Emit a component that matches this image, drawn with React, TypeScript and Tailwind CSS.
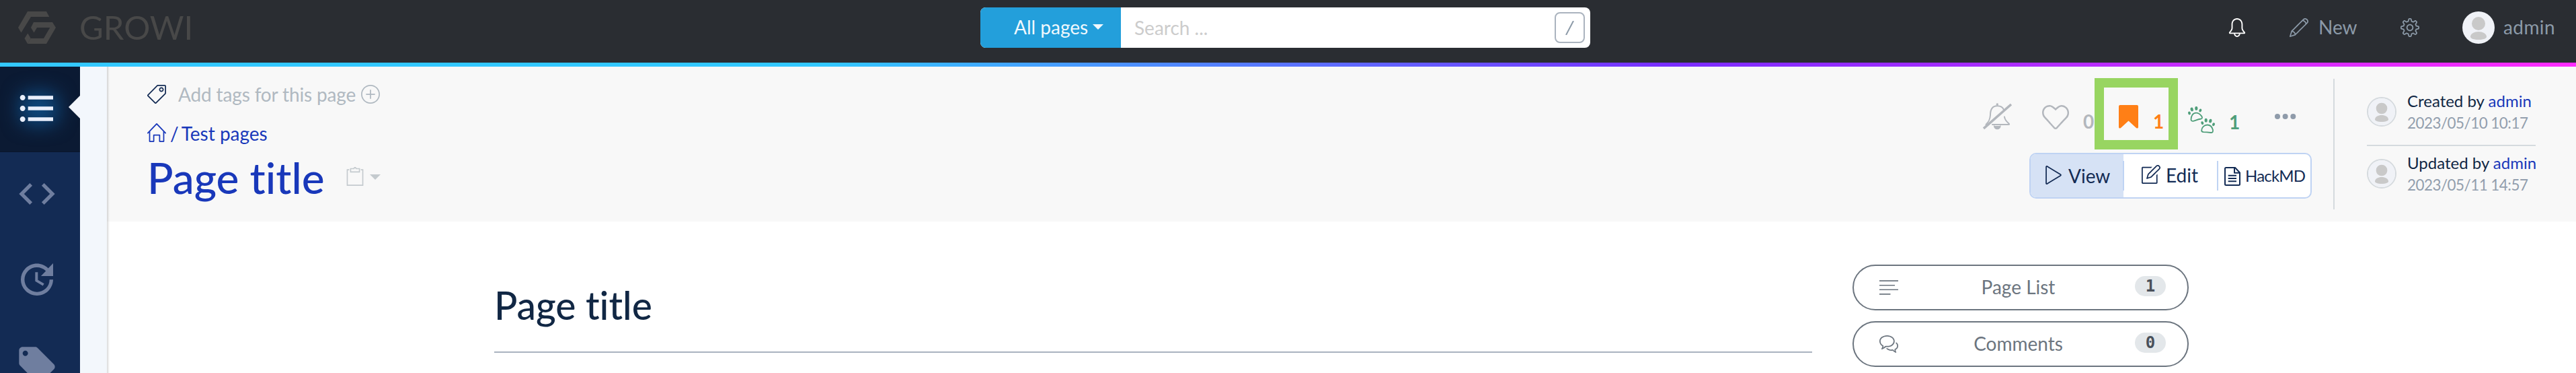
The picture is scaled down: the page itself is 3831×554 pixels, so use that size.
import React from "react";
import { SlBell, SlBubbles, SlControlPlay, SlHeart, SlHome, SlNote, SlPencil, SlPlus, SlSettings, SlTag } from "react-icons/sl";
import { TfiAlignLeft, TfiClipboard } from "react-icons/tfi";
import { MdCode, MdFormatListBulleted, MdLocalOffer, MdUpdate } from "react-icons/md";

function Logo() {
  return (
    <svg className="h-12 w-14 shrink-0" viewBox="0 0 56 48" fill="currentColor">
      <polygon points="14,0 42,0 46.3,8 19,8 4.5,31.5 0,24" />
      <polygon points="23,16 51,16 56,24 42,48 14,48 18.7,40 38,40 47.3,24 28,24 23.5,31.5 19,24" />
      <polygon points="14.3,32.5 18.7,40 14,48 9.5,40" />
    </svg>
  );
}

function Caret({ className }: { className: string }) {
  return (
    <svg className={className} viewBox="0 0 16 8" preserveAspectRatio="none" fill="currentColor">
      <polygon points="0,0 16,0 8,8" />
    </svg>
  );
}

function Avatar({ className }: { className: string }) {
  return (
    <svg className={className} viewBox="0 0 48 48">
      <circle cx="24" cy="24" r="24" fill="#f0f2f7" />
      <circle cx="24" cy="18" r="10" fill="#c9c9c9" />
      <path d="M12 37.5c0-4.5 6-7.5 12-7.5s12 3 12 7.5c0 3-5.5 4.5-12 4.5s-12-1.500-12-4.500z" fill="#c9c9c9" />
    </svg>
  );
}

function BellSlash() {
  return (
    <svg className="h-10 w-[45px]" viewBox="0 0 45 40" fill="none" stroke="currentColor" strokeWidth="2" strokeLinecap="round" strokeLinejoin="round">
      <circle cx="22.3" cy="2" r="1.7" fill="currentColor" stroke="none" />
      <path d="M5.500 32C9.500 28 11.500 25 12 18C12 9 15 4.300 22.300 4.300C27 4.300 30.500 6.500 32 10" />
      <path d="M33 20.500C33.500 25 36 27.500 39.500 30.500Q41 32 39 32H15" />
      <path d="M17.700 34a4.600 4.600 0 1 0 9.200 0" fill="currentColor" strokeWidth="1.5" />
      <path d="M2 37.800L43 2" strokeWidth="3.6" strokeLinecap="butt" />
    </svg>
  );
}

function Footprints() {
  return (
    <svg className="size-10 overflow-visible" viewBox="0 0 40 40" fill="currentColor">
      <ellipse cx="2" cy="10" rx="1.9" ry="2.5" transform="rotate(-20 2 10)" />
      <ellipse cx="5.7" cy="4.5" rx="2.1" ry="2.9" transform="rotate(-15 5.7 4.5)" />
      <ellipse cx="12.3" cy="2.9" rx="2.1" ry="2.9" />
      <ellipse cx="18.3" cy="6" rx="1.9" ry="2.5" transform="rotate(25 18.3 6)" />
      <ellipse cx="21.3" cy="24.7" rx="1.9" ry="2.5" transform="rotate(-20 21.3 24.7)" />
      <ellipse cx="26.7" cy="20.7" rx="2.1" ry="2.9" />
      <ellipse cx="33.3" cy="21.7" rx="2.1" ry="2.9" transform="rotate(12 33.3 21.7)" />
      <ellipse cx="38" cy="26.8" rx="1.9" ry="2.5" transform="rotate(25 38 26.8)" />
      <g fill="none" stroke="currentColor" strokeWidth="1.8" strokeLinejoin="round">
        <path d="M4.500 19.500C4.500 15 6.500 9.700 12 9.700C17 9.700 18.500 12.500 20.500 15C21.500 16.800 21 18 19.500 18.500C15 19 12 20.500 8.500 21.700C6 22.300 4.500 21.500 4.500 19.500Z" />
        <path d="M20.200 35.500C20.500 31 24 27.500 28.700 27.500C33.500 27.500 36 31 37 35C37.300 38 36.500 39 34 39C30 38.500 27 38.200 23 38.200C21 38 20 37.500 20.200 35.500Z" />
      </g>
    </svg>
  );
}

function DocIcon() {
  return (
    <svg className="h-7 w-6" viewBox="0 0 24 28" fill="none" stroke="currentColor" strokeWidth="2" strokeLinejoin="round">
      <path d="M2.500 1H16L23 8.500V25.500Q23 27 21.500 27H2.500Q1 27 1 25.500V2.500Q1 1 2.500 1Z" />
      <path d="M15 1V8.700H23" />
      <path d="M5.700 12.700H18M5.700 17H18M5.700 21.300H18" />
    </svg>
  );
}

function Author({ label, date }: { label: string; date: string }) {
  return (
    <div className="flex h-[92px] pt-[27px]">
      <div className="size-11 rounded-full border-2 border-[#d5dade]">
        <Avatar className="size-10" />
      </div>
      <div className="-mt-[12px] ml-[16px] flex flex-col">
        <div className="h-[34px] text-[24px] leading-[36px] text-[#112744]">
          {label} <span className="text-[#1938ba]">admin</span>
        </div>
        <div className="text-[22.4px] leading-[34px] tracking-[-0.5px] text-[#929ead]">{date}</div>
      </div>
    </div>
  );
}

function SideButton({ icon, label, count }: { icon: React.ReactNode; label: string; count: string }) {
  return (
    <div className="flex h-[68px] w-[500px] items-center rounded-full border-2 border-[#6c757f] pr-8 pl-[38px] text-[#6c757f]">
      {icon}
      <div className="mb-[2px] flex-1 pl-[5px] text-center text-[28px] leading-[42px]">{label}</div>
      <div className="mb-1 flex h-[30px] w-[46px] items-center justify-center rounded-full bg-[#e3e7ea] font-['DejaVu_Sans_Mono',monospace] text-[24px] leading-none font-bold text-[#49505a]">
        {count}
      </div>
    </div>
  );
}

function TopBar() {
  return (
    <header className="h-[99px] shrink-0 bg-[#2a2d32]">
      <div className="flex h-[93px] items-center pb-[11px] text-[28px] text-[#8c9aa8]">
        <div className="flex w-[1458px] items-center pl-[27px] text-[#484848]">
          <Logo />
          <span className="mb-[2px] ml-[35px] text-[49px] leading-[60px]">GROWI</span>
        </div>
        <div className="flex h-[60px] w-[907px] overflow-hidden rounded-lg bg-white">
          <div className="flex w-[209px] items-center bg-[#239fdb] pl-[50px] text-[#f0f8fd]">
            <span className="mb-[2px]">All pages</span>
            <Caret className="mb-[2px] ml-[7px] h-2 w-4" />
          </div>
          <div className="flex flex-1 items-center justify-between pr-2 pl-5">
            <span className="text-[#cccccc]">Search ...</span>
            <span className="flex h-[46px] w-[45px] items-center justify-center rounded-lg border-2 border-[#aab3be] text-[#8c9aa8]">
              <svg className="h-[21px] w-[13px]" viewBox="0 0 13 21" stroke="currentColor" strokeWidth="2"><path d="M12 0L1 21" /></svg>
            </span>
          </div>
        </div>
        <SlBell className="ml-[948px] size-7 text-white" />
        <SlPencil className="ml-[64px] size-7" />
        <span className="mb-[2px] ml-[15px] w-[122px]">New</span>
        <SlSettings className="size-7" />
        <Avatar className="ml-[64px] size-12" />
        <span className="mb-[2px] ml-[13px] tracking-[0.4px]">admin</span>
      </div>
      <div className="h-[6px] bg-[linear-gradient(90deg,#33c8ff_32%,#7a2dff_65%,#ff2bff_100%)]" />
    </header>
  );
}

function Sidebar() {
  return (
    <nav className="flex w-[159px] shrink-0 overflow-hidden bg-[#f3f7fc]">
      <div className="h-[600px] w-[119px] bg-[#132b54] text-[#6f7e9f]">
        <div className="relative h-[127px] border-b border-[#0a152b] bg-[#0b1a33] pt-[30px] pl-[23px] text-[#e9effb]">
          <div className="absolute top-[38px] left-[30px] h-[48px] w-[56px] rounded-xl bg-[#0f4a80] blur-[14px]" />
          <MdFormatListBulleted className="relative size-16" />
          <svg className="absolute top-[43px] right-0 h-[34px] w-[17px]" viewBox="0 0 17 34" fill="#f3f6fd">
            <polygon points="17,0 17,34 0,17" />
          </svg>
        </div>
        <div className="h-[127px] pt-[30px] pl-[23px]"><MdCode className="size-16" /></div>
        <div className="h-[127px] pt-[30px] pl-[23px]"><MdUpdate className="size-16" /></div>
        <div className="h-[127px] pt-[30px] pl-[23px]"><MdLocalOffer className="size-16" /></div>
      </div>
    </nav>
  );
}

function PageActions() {
  return (
    <div className="w-[420px] text-[28px]">
      <div className="relative flex h-[128px] leading-[42px] font-bold">
        <div className="-ml-[70px] pt-[54px] text-[#b3b7bd]"><BellSlash /></div>
        <SlHeart className="mt-[55px] ml-[44px] size-10 text-[#b3b7bd]" />
        <span className="mt-[60px] ml-[21px] w-[53px] text-[#b3b7bd]">0</span>
        <svg className="mt-[57px] h-[35px] w-[29px] text-[#ff7f16]" viewBox="0 0 29 35" fill="currentColor">
          <path d="M2 0H27Q29 0 29 2V33Q28.500 35.500 26 34L14.500 23.500L3 34Q.5 35.500 0 33V2Q0 0 2 0Z" />
        </svg>
        <span className="mt-[60px] ml-[22px] w-[52px] text-[#ff7f16]">1</span>
        <div className="mt-[59px] text-[#4f9e7a]"><Footprints /></div>
        <span className="mt-[61px] ml-[21px] w-[68px] text-[#4f9e7a]">1</span>
        <svg className="mt-[70px] h-2 w-8 shrink-0 text-[#8f9baa]" viewBox="0 0 32 8" fill="currentColor">
          <circle cx="4" cy="4" r="4" />
          <circle cx="15.6" cy="4" r="4" />
          <circle cx="27.3" cy="4" r="4" />
        </svg>
        <div className="absolute top-[17px] left-[97px] h-[106px] w-[124px] border-[14px] border-[#98d561]" />
      </div>
      <div className="flex h-[68px] items-center overflow-hidden rounded-[10px] border-2 border-[#bfd3f3] bg-white text-[#132b54]">
        <div className="flex h-full w-[138px] items-center bg-[#d6e2f5] pl-[20px]">
          <SlControlPlay className="mb-[2px] size-7" />
          <span className="ml-[8px]">View</span>
        </div>
        <div className="-ml-px h-[44px] w-[2px] bg-[#bfd3f3]" />
        <div className="flex w-[138px] items-center pl-[26px]">
          <SlNote className="mb-[4px] size-7 shrink-0" />
          <span className="mb-[2px] ml-[8px]">Edit</span>
        </div>
        <div className="h-[44px] w-[2px] bg-[#bfd3f3]" />
        <div className="ml-[9px] pt-[2px]"><DocIcon /></div>
        <span className="ml-[7px] text-[24px] tracking-[-0.8px]">HackMD</span>
      </div>
    </div>
  );
}

function SubNav() {
  return (
    <div className="flex h-[230px] shrink-0 bg-[#f8f8f8] pl-[60px]">
      <div className="flex w-[2799px] flex-col text-[28px] leading-[42px]">
        <div className="mt-[20px] flex h-[42px] items-center text-[#b0b9c1]">
          <SlTag className="size-7 text-[#132b54]" />
          <span className="ml-[18px] tracking-[-0.15px]">Add tags for this page</span>
          <SlPlus className="ml-[8px] size-7" />
        </div>
        <div className="mt-[15px] flex h-[42px] items-center text-[#1938ba]">
          <SlHome className="size-7" />
          <span className="mt-[2px] ml-[6px]">/</span>
          <span className="mt-[2px] ml-[4px]">Test pages</span>
        </div>
        <div className="flex h-[92px] items-center text-[#1938ba]">
          <span className="text-[64px] leading-[80px] font-medium">Page title</span>
          <TfiClipboard className="-mt-[4px] ml-[31px] size-7 text-[#c4cace]" />
          <Caret className="-mt-[2px] ml-[8px] h-2 w-4 text-[#c4cace]" />
        </div>
      </div>
      <PageActions />
      <div className="mt-[18px] ml-[32px] h-[194px] w-[2px] bg-[#d5dade]" />
      <div className="ml-[48px] w-[251px] pt-[18px] whitespace-nowrap">
        <Author label="Created by" date="2023/05/10 10:17" />
        <div className="mt-[6px] -mb-[8px] h-[2px] bg-[#d5dade]" />
        <Author label="Updated by" date="2023/05/11 14:57" />
      </div>
    </div>
  );
}

export default function App() {
  return (
    <div className="flex h-[554px] w-[3831px] flex-col overflow-hidden bg-white font-['Lato',sans-serif] [font-variant-ligatures:none]">
      <TopBar />
      <div className="flex min-h-0 flex-1">
        <Sidebar />
        <div className="relative flex flex-1 flex-col">
          <SubNav />
          <div className="flex items-start pl-[576px]">
            <div className="w-[1960px] border-b-2 border-[#a9b3bf]">
              <h1 className="mt-[86px] h-[107px] text-[57px] leading-[76px] font-medium text-[#112744]">Page title</h1>
            </div>
            <div className="mt-[64px] ml-[60px] flex flex-col gap-4">
              <SideButton icon={<TfiAlignLeft className="size-7" />} label="Page List" count="1" />
              <SideButton icon={<SlBubbles className="size-7" />} label="Comments" count="0" />
            </div>
          </div>
          <div className="absolute top-0 left-0 h-full w-[4px] bg-linear-to-r from-black/15 to-transparent" />
        </div>
      </div>
    </div>
  );
}
